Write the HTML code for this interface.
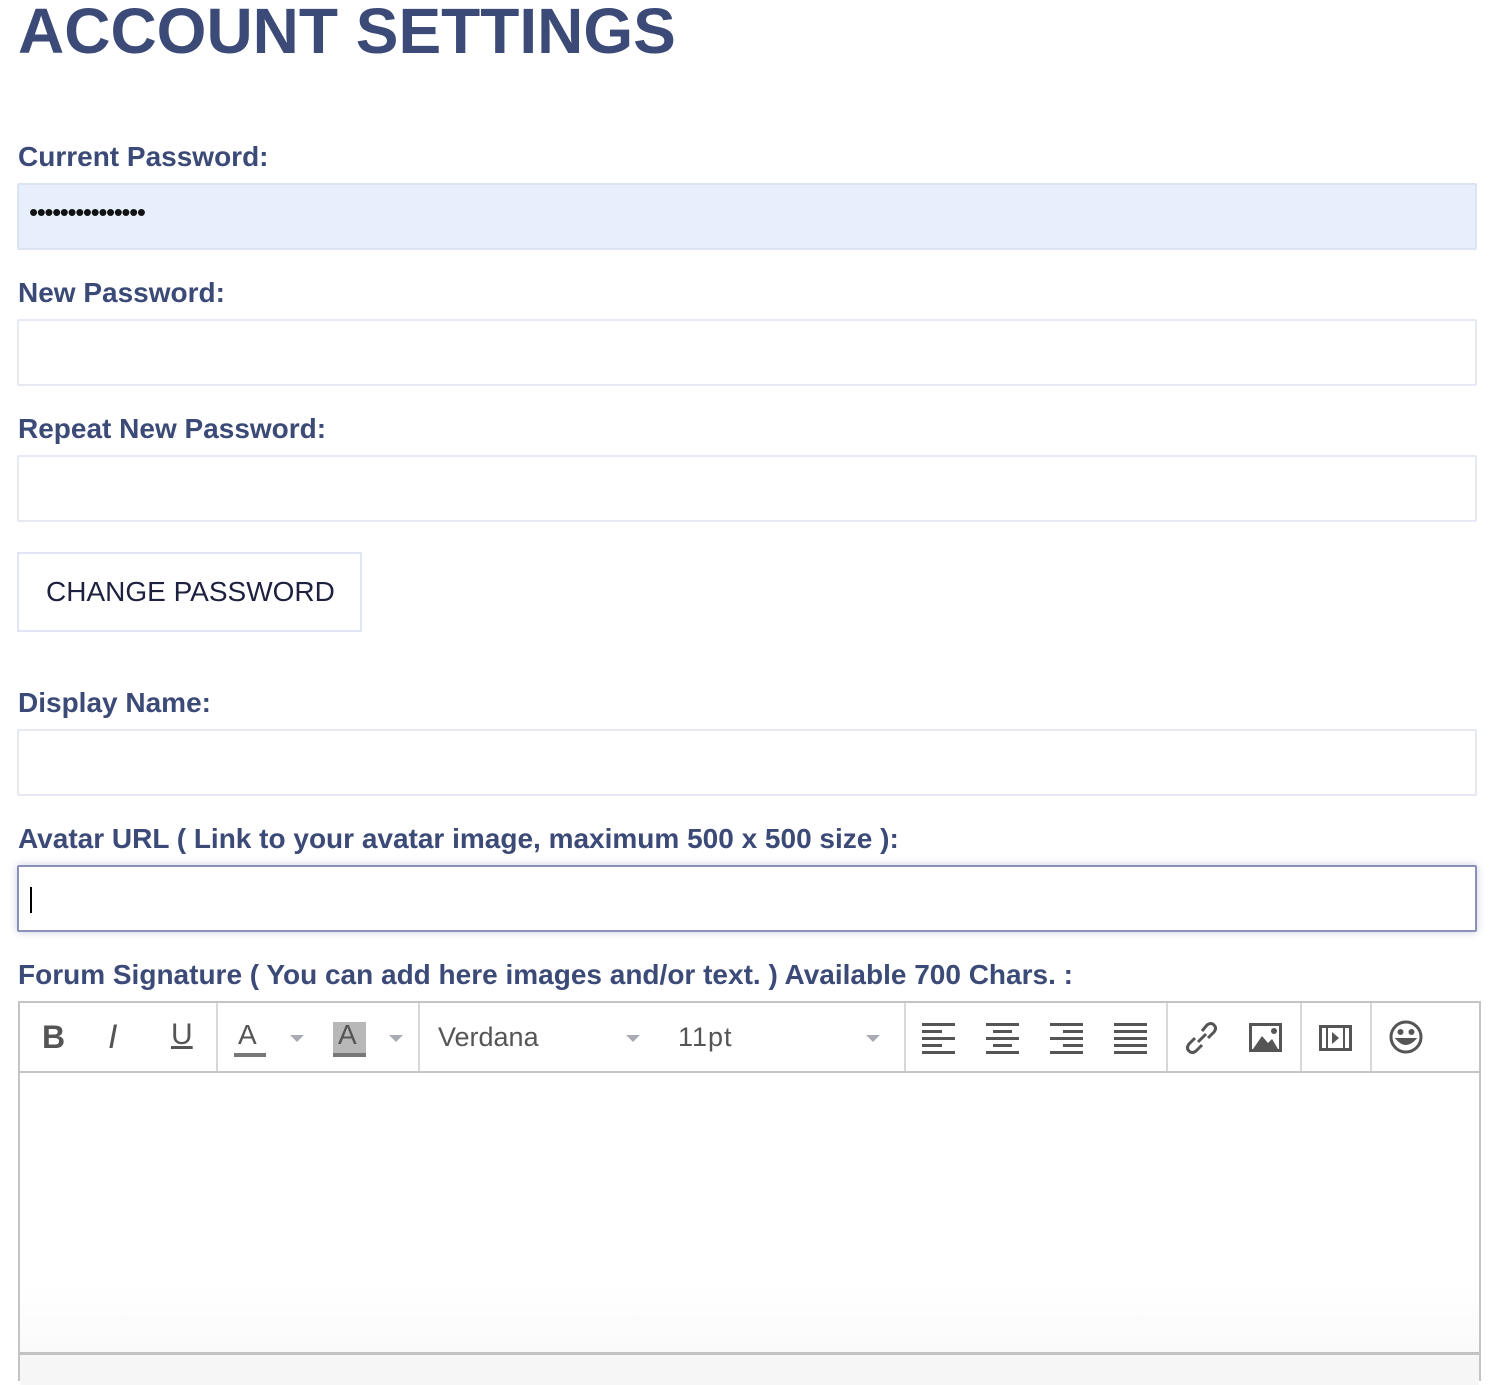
<!DOCTYPE html>
<html><head><meta charset="utf-8"><style>
*{margin:0;padding:0;box-sizing:border-box}
body{width:1492px;height:1374px;background:#fff;position:relative;overflow:hidden;font-family:"Liberation Sans",Arial,sans-serif}
.h{position:absolute;left:18px;top:-6px;font-size:64px;font-weight:bold;color:#3b4a77;line-height:74px;white-space:nowrap}
.l{position:absolute;left:18px;font-size:28px;font-weight:bold;color:#3b4a77;line-height:30px;white-space:nowrap}
.i{position:absolute;left:17px;width:1460px;height:67px;border:2px solid #e6e8f3;border-radius:2px;background:#fff}
.btn{position:absolute;left:17px;top:552px;width:345px;height:80px;border:2px solid #e2e5f5;font-size:28px;color:#1e2040;line-height:76px;padding-left:27px;white-space:nowrap}
.ed{position:absolute;left:18px;top:1001px;width:1463px;height:380px;border:2px solid #c4c4c4;border-bottom:none}
.tb{position:absolute;left:0;top:0;width:100%;height:70px;border-bottom:2px solid #c4c4c4;background:#fff}
.sep{position:absolute;top:0;width:2px;height:68px;background:#d8d8d8}
.ic{position:absolute;color:#555;font-weight:bold;font-size:30px;line-height:30px}
.ar{position:absolute;top:32px;width:0;height:0;border-left:7px solid transparent;border-right:7px solid transparent;border-top:7px solid #a9acb3}
</style></head><body>
<div class="h">ACCOUNT SETTINGS</div>
<div class="l" style="top:142px">Current Password:</div>
<div class="i" style="top:183px;background:#e8effc;border-color:#dce4f3"><span style="position:absolute;left:10px;top:12px;font-size:26px;letter-spacing:-1.4px;color:#111">•••••••••••••••</span></div>
<div class="l" style="top:278px">New Password:</div>
<div class="i" style="top:319px"></div>
<div class="l" style="top:414px">Repeat New Password:</div>
<div class="i" style="top:455px"></div>
<div class="btn">CHANGE PASSWORD</div>
<div class="l" style="top:688px">Display Name:</div>
<div class="i" style="top:729px"></div>
<div class="l" style="top:824px">Avatar URL ( Link to your avatar image, maximum 500 x 500 size ):</div>
<div class="i" style="top:865px;border-color:#8a90b8;box-shadow:0 0 8px rgba(100,110,170,.35)"><span style="position:absolute;left:11px;top:20px;width:2px;height:26px;background:#000"></span></div>
<div class="l" style="top:960px">Forum Signature ( You can add here images and/or text. ) Available 700 Chars. :</div>
<div class="ed">
 <div class="tb">
  <div class="ic" style="left:22px;top:19px;font-size:32px">B</div>
  <div class="ic" style="left:88px;top:19px;font-style:italic;font-weight:normal;font-size:34px">I</div>
  <div class="ic" style="left:151px;top:17px;font-weight:normal;font-size:30px;text-decoration:underline">U</div>
  <div class="sep" style="left:196px"></div>
  <div class="ic" style="left:218px;top:17px;font-weight:normal;font-size:28px">A</div>
  <div style="position:absolute;left:214px;top:50px;width:32px;height:4px;background:#777"></div>
  <div class="ar" style="left:270px"></div>
  <div style="position:absolute;left:313px;top:19px;width:33px;height:32px;background:#b8b8b8"></div>
  <div class="ic" style="left:318px;top:17px;font-weight:normal;font-size:28px">A</div>
  <div style="position:absolute;left:313px;top:50px;width:33px;height:4px;background:#777"></div>
  <div class="ar" style="left:369px"></div>
  <div class="sep" style="left:398px"></div>
  <div class="ic" style="left:418px;top:19px;font-weight:normal;font-size:27px;color:#555">Verdana</div>
  <div class="ar" style="left:606px"></div>
  <div class="ic" style="left:658px;top:19px;font-weight:normal;font-size:27px;color:#555;letter-spacing:1px">11pt</div>
  <div class="ar" style="left:846px"></div>
  <div class="sep" style="left:884px"></div>
  <svg style="position:absolute;left:902px;top:17px" width="240" height="34" fill="#555">
   <g><rect x="0" y="3" width="33" height="3"/><rect x="0" y="10" width="20" height="3"/><rect x="0" y="17" width="33" height="3"/><rect x="0" y="24" width="20" height="3"/><rect x="0" y="31" width="33" height="3"/></g>
   <g transform="translate(64,0)"><rect x="0" y="3" width="33" height="3"/><rect x="7" y="10" width="19" height="3"/><rect x="0" y="17" width="33" height="3"/><rect x="7" y="24" width="19" height="3"/><rect x="0" y="31" width="33" height="3"/></g>
   <g transform="translate(128,0)"><rect x="0" y="3" width="33" height="3"/><rect x="13" y="10" width="20" height="3"/><rect x="0" y="17" width="33" height="3"/><rect x="13" y="24" width="20" height="3"/><rect x="0" y="31" width="33" height="3"/></g>
   <g transform="translate(192,0)"><rect x="0" y="3" width="33" height="3"/><rect x="0" y="10" width="33" height="3"/><rect x="0" y="17" width="33" height="3"/><rect x="0" y="24" width="33" height="3"/><rect x="0" y="31" width="33" height="3"/></g>
  </svg>
  <div class="sep" style="left:1146px"></div>
  <svg style="position:absolute;left:1164px;top:17px" width="36" height="36" fill="none" stroke="#555" stroke-width="3">
   <path d="M14 22 L22 14"/><path d="M18 11 L23 5 Q27 2 30 5 Q33 8 30 12 L24 18"/><path d="M18 25 L12 31 Q8 34 5 31 Q2 28 5 24 L11 18"/>
  </svg>
  <svg style="position:absolute;left:1229px;top:20px" width="34" height="30">
   <rect x="1.5" y="1.5" width="30" height="26" fill="none" stroke="#555" stroke-width="3"/>
   <path d="M4 26 L13 13 L19 20 L23 16 L29 26Z" fill="#555"/><circle cx="25" cy="8" r="3" fill="#555"/>
  </svg>
  <div class="sep" style="left:1280px"></div>
  <svg style="position:absolute;left:1299px;top:22px" width="34" height="26">
   <rect x="1.5" y="1.5" width="30" height="23" fill="none" stroke="#555" stroke-width="3"/>
   <rect x="7" y="1" width="2" height="24" fill="#555"/><rect x="24" y="1" width="2" height="24" fill="#555"/>
   <path d="M13 7 L20 13 L13 19Z" fill="#555"/>
   <g fill="#fff"><rect x="3" y="8" width="4" height="2"/><rect x="3" y="16" width="4" height="2"/><rect x="26" y="8" width="4" height="2"/><rect x="26" y="16" width="4" height="2"/></g>
  </svg>
  <div class="sep" style="left:1350px"></div>
  <svg style="position:absolute;left:1368px;top:16px" width="36" height="36" fill="none" stroke="#555" stroke-width="3">
   <circle cx="18" cy="18" r="15"/><circle cx="12.5" cy="13" r="1.5" fill="#555"/><circle cx="23.5" cy="13" r="1.5" fill="#555"/>
   <path d="M9 20 Q18 30 27 20Z" fill="#555" stroke-width="2"/>
  </svg>
 </div>
 <div style="position:absolute;left:0;top:280px;width:100%;height:70px;background:linear-gradient(#fff,#fafafa)"></div>
 <div style="position:absolute;left:0;top:349px;width:100%;height:3px;background:#c2c2c2"></div>
 <div style="position:absolute;left:0;top:352px;width:100%;height:30px;background:#f6f6f6"></div>
</div>
</body></html>
